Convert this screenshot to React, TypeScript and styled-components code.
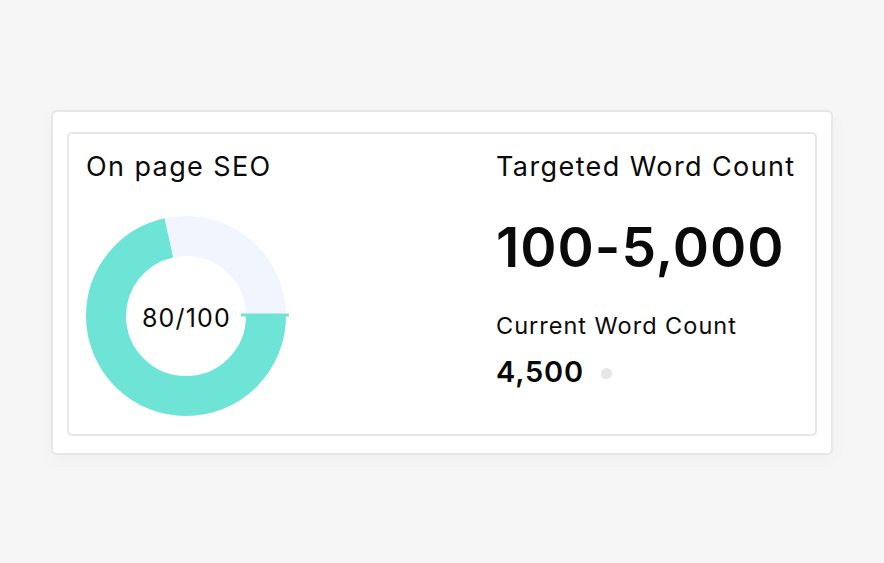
import React from 'react';
import styled, { createGlobalStyle } from 'styled-components';

const GlobalStyle = createGlobalStyle`
  html, body {
    margin: 0;
    padding: 0;
    background: #f6f6f6;
  }
  body {
    font-family: 'Inter', 'Liberation Sans', sans-serif;
    color: #0a0a0a;
  }
`;

const Page = styled.div`
  min-height: 100vh;
  box-sizing: border-box;
  padding: 110px 51px 0;
`;

const OuterCard = styled.div`
  background: #fff;
  border: 2px solid #e7e7e7;
  border-radius: 6px;
  padding: 20px 14px 17px;
  box-shadow: 0 6px 18px rgba(0, 0, 0, 0.03);
`;

const InnerCard = styled.div`
  border: 2px solid #e7e7e7;
  border-radius: 5px;
  height: 300px;
  display: grid;
  grid-template-columns: 1fr 319px;
`;

const Column = styled.div`
  display: flex;
  flex-direction: column;
  padding-top: 16px;
`;

const LeftColumn = styled(Column)`
  padding-left: 17px;
`;

const Title = styled.h2`
  margin: 0;
  font-size: 27px;
  font-weight: 400;
  line-height: 34px;
  letter-spacing: 1.4px;
`;

const ChartWrap = styled.div`
  position: relative;
  width: 201px;
  height: 201px;
  margin-top: 32px;
`;

const ChartLabel = styled.span`
  position: absolute;
  inset: 0;
  display: flex;
  align-items: center;
  justify-content: center;
  font-size: 25px;
  letter-spacing: 1.2px;
  padding-top: 3px;
`;

const BigNumber = styled.div`
  font-size: 55px;
  font-weight: 600;
  line-height: 64px;
  margin-top: 31px;
  letter-spacing: 1px;
`;

const SubTitle = styled.div`
  font-size: 23.5px;
  line-height: 30px;
  margin-top: 32px;
  letter-spacing: 1px;
`;

const CountRow = styled.div`
  display: flex;
  align-items: center;
  gap: 17px;
  margin-top: 13px;
`;

const Count = styled.span`
  font-size: 29px;
  font-weight: 600;
  line-height: 36px;
  letter-spacing: 0.8px;
`;

const Dot = styled.span`
  width: 11px;
  height: 11px;
  border-radius: 50%;
  background: #e6e6e6;
  margin-top: 3px;
`;

const Donut = ({ value, total }: { value: number; total: number }) => {
  const r = 80;
  const c = 2 * Math.PI * r;
  const filled = (value / total) * c;
  return (
    <svg width="204" height="201" viewBox="0 0 204 201" style={{ overflow: 'visible' }}>
      <circle cx="100" cy="100" r={r} fill="none" stroke="#f1f6fe" strokeWidth="40" />
      <circle
        cx="100"
        cy="100"
        r={r}
        fill="none"
        stroke="#6ee4d6"
        strokeWidth="40"
        strokeDasharray={`${filled} ${c}`}
      />
      <rect x="155" y="97.5" width="48" height="3" fill="#6ee4d6" />
    </svg>
  );
};

export default function App() {
  return (
    <>
      <GlobalStyle />
      <Page>
        <OuterCard>
          <InnerCard>
            <LeftColumn>
              <Title>On page SEO</Title>
              <ChartWrap>
                <Donut value={100} total={140} />
                <ChartLabel>80/100</ChartLabel>
              </ChartWrap>
            </LeftColumn>
            <Column>
              <Title>Targeted Word Count</Title>
              <BigNumber>100-5,000</BigNumber>
              <SubTitle>Current Word Count</SubTitle>
              <CountRow>
                <Count>4,500</Count>
                <Dot />
              </CountRow>
            </Column>
          </InnerCard>
        </OuterCard>
      </Page>
    </>
  );
}
